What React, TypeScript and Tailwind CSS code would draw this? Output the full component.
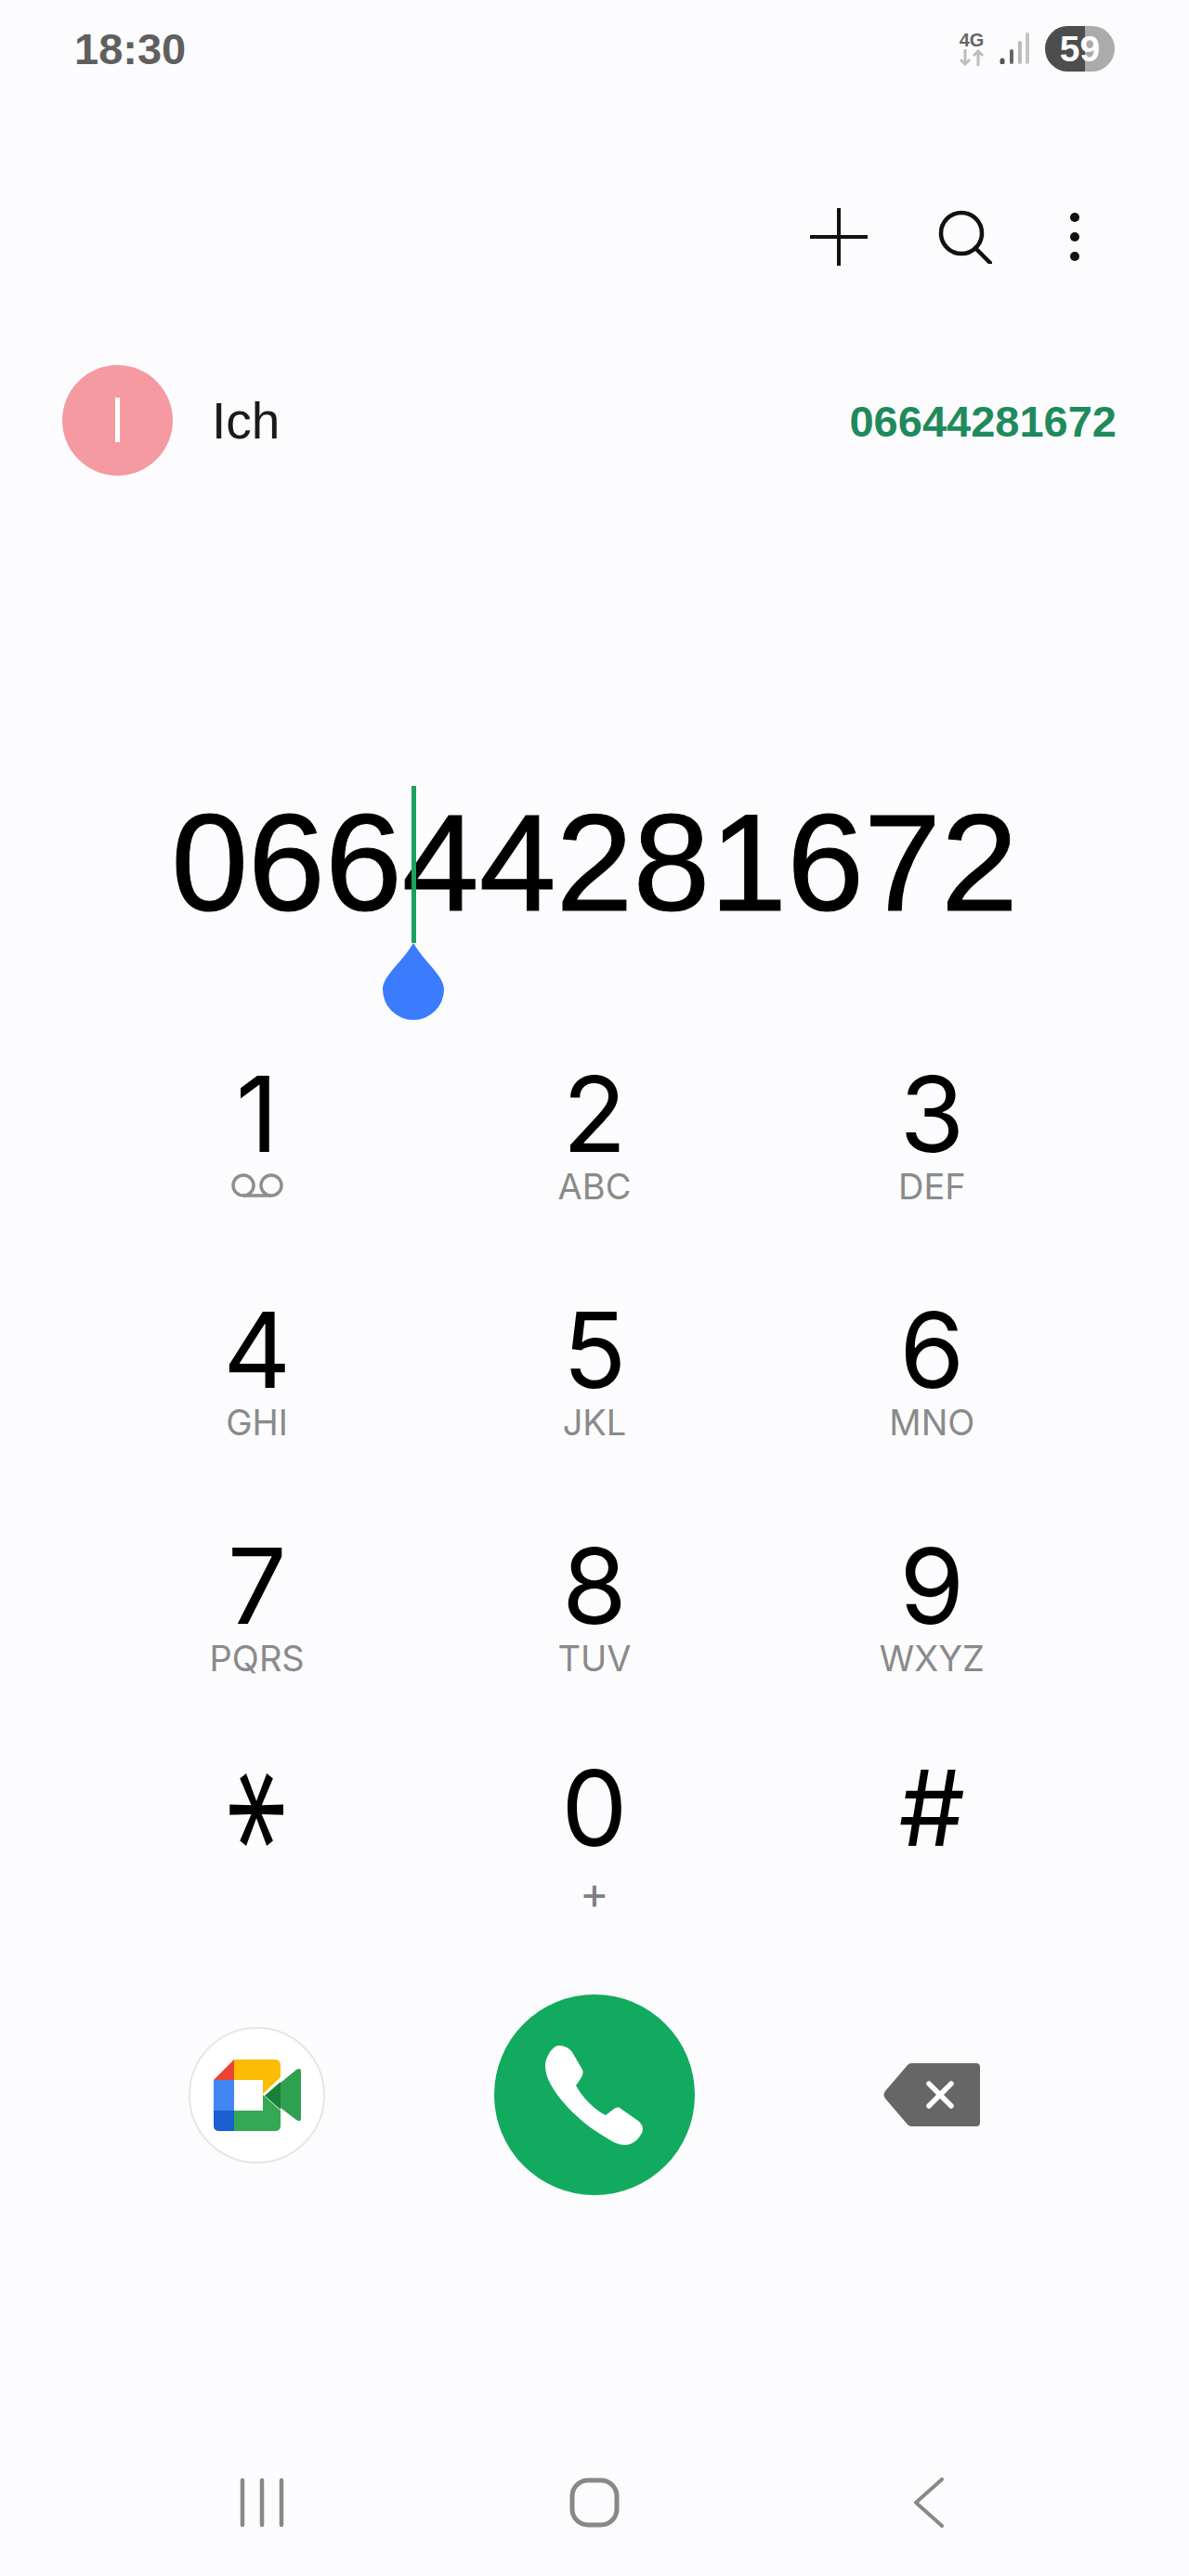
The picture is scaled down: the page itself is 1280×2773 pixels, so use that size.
const keys = [
  { digit: "1", sub: "" },
  { digit: "2", sub: "ABC" },
  { digit: "3", sub: "DEF" },
  { digit: "4", sub: "GHI" },
  { digit: "5", sub: "JKL" },
  { digit: "6", sub: "MNO" },
  { digit: "7", sub: "PQRS" },
  { digit: "8", sub: "TUV" },
  { digit: "9", sub: "WXYZ" },
  { digit: "*", sub: "" },
  { digit: "0", sub: "+" },
  { digit: "#", sub: "" },
];

function StatusIcons() {
  return (
    <div className="flex items-center">
      <div className="flex flex-col items-center w-[32px]">
        <span className="text-[20px] leading-[20px] font-bold text-[#666666] font-['Liberation_Sans',sans-serif]">4G</span>
        <svg width="30" height="18" viewBox="0 0 30 18" fill="none" stroke="#bdbdbd" strokeWidth="3">
          <path d="M8 0v16M3 11l5 5 5-5" />
          <path d="M22 18V2M17 7l5-5 5 5" />
        </svg>
      </div>
      <svg className="ml-[14px]" width="32" height="34" viewBox="0 0 32 34" fill="none" strokeLinecap="round" strokeWidth="4">
        <path d="M3 30v2" stroke="#555555" strokeWidth="5" />
        <path d="M13 20v12" stroke="#666666" />
        <path d="M22 11v21" stroke="#bbbbbb" />
        <path d="M30 2v30" stroke="#c4c4c4" />
      </svg>
      <div className="ml-[17px] w-[75px] h-[49px] rounded-full overflow-hidden flex items-center justify-center bg-[linear-gradient(90deg,#4d4d4d_0,#4d4d4d_58%,#ababab_58%,#ababab_100%)]">
        <span className="text-[39px] leading-none font-semibold text-white font-['Liberation_Sans',sans-serif]">59</span>
      </div>
    </div>
  );
}

function MeetLogo() {
  return (
    <svg width="94" height="77" viewBox="0 0 94 77">
      <path d="M22 0L0 22h22z" fill="#ea4335" />
      <path d="M22 0h44q6 0 6 6v13L53 37V22H22z" fill="#fbbc04" />
      <path d="M0 22h22v33H0z" fill="#4285f4" />
      <path d="M0 55h22v22H6q-6 0-6-6z" fill="#1a5fd0" />
      <path d="M22 55h31V38l19 17v16q0 6-6 6H22z" fill="#34a853" />
      <path d="M55 39L89 11q5-3 5 2v50q0 5-5 2z" fill="#2fa04f" />
      <path d="M55 39l17-15v30z" fill="#188038" />
    </svg>
  );
}

export default function App() {
  return (
    <div className="w-[1280px] h-[2773px] overflow-hidden bg-[#fcfcfe] font-['Inter','Liberation_Sans',sans-serif]">
      <div className="h-[104px] pl-[80px] pr-[80px] flex items-center justify-between">
        <span className="text-[47px] font-bold text-[#5f5f5f] leading-none font-['Liberation_Sans',sans-serif]">18:30</span>
        <StatusIcons />
      </div>

      {/* toolbar */}
      <div className="mt-[100px] h-[102px] flex items-center justify-end pr-[118px]">
        <svg width="62" height="62" viewBox="0 0 62 62" fill="none" stroke="#111111" strokeWidth="4">
          <path d="M0 31h62M31 0v62" />
        </svg>
        <svg className="ml-[76px]" width="58" height="58" viewBox="0 0 58 58" fill="none" stroke="#111111" strokeWidth="4.5" strokeLinecap="round">
          <circle cx="25" cy="25" r="22" />
          <path d="M40 41l16 16" />
        </svg>
        <div className="ml-[84px] w-[10px] h-[52px] flex flex-col justify-between">
          <span className="w-[10px] h-[10px] rounded-full bg-[#111111]" />
          <span className="w-[10px] h-[10px] rounded-full bg-[#111111]" />
          <span className="w-[10px] h-[10px] rounded-full bg-[#111111]" />
        </div>
      </div>

      {/* suggested contact */}
      <div className="mt-[86px] h-[120px] pl-[67px] pr-[78px] flex items-center justify-between">
        <div className="flex items-center">
          <div className="w-[119px] h-[119px] rounded-full bg-[#f59aa1] flex items-center justify-center">
            <span className="w-[5px] h-[48px] bg-white" />
          </div>
          <span className="ml-[42px] pt-[3px] text-[55px] leading-none text-[#1a1a1a] font-['Liberation_Sans',sans-serif]">Ich</span>
        </div>
        <span className="pt-[2px] text-[47px] leading-none font-bold text-[#1f8a5b] font-['Liberation_Sans',sans-serif]">06644281672</span>
      </div>

      {/* dialed number */}
      <div className="mt-[326px] h-[180px] flex items-center justify-center">
        <div className="relative">
          <span className="block text-[149px] leading-none text-black [-webkit-text-stroke:1px_black] font-['Liberation_Sans',sans-serif]">06644281672</span>
          <div className="absolute left-[228px] top-[-8px] flex flex-col items-center">
            <span className="w-[5px] h-[169px] bg-[#1aa35d]" />
            <svg width="66" height="83" viewBox="0 0 66 83">
              <path d="M33 0C44 20 66 35 66 50A33 33 0 0 1 0 50C0 35 22 20 33 0z" fill="#3b7cff" />
            </svg>
          </div>
        </div>
      </div>

      {/* keypad */}
      <div className="mt-[122px] px-[95px] grid grid-cols-3 grid-rows-[254px_254px_239px_259px]">
        {keys.map((k) => (
          <div key={k.digit} className="flex flex-col items-center">
            <span className="h-[118px] flex items-center text-[113px] leading-none text-black">
              {k.digit === "*" ? (
                <span className="inline-block rotate-90 scale-x-[1.2] scale-y-[0.83] text-[170px] font-light leading-none translate-x-[-23px] translate-y-[2px]">*</span>
              ) : (
                k.digit
              )}
            </span>
            {k.digit === "1" ? (
              <div className="h-[38px] flex items-center">
                <svg width="58" height="28" viewBox="0 0 58 28" fill="none" stroke="#8e8e8e" strokeWidth="3.5">
                  <circle cx="14" cy="13" r="11" />
                  <circle cx="44" cy="13" r="11" />
                  <path d="M14 24h30" />
                </svg>
              </div>
            ) : k.digit === "0" ? (
              <span className="mt-[14px] h-[38px] text-[48px] leading-[38px] text-[#808080]">+</span>
            ) : (
              <span className="h-[38px] text-[38px] leading-[38px] text-[#8a8a8a]">{k.sub}</span>
            )}
          </div>
        ))}
      </div>

      {/* actions */}
      <div className="px-[95px] h-[218px] grid grid-cols-3 items-center justify-items-center">
        <div className="w-[147px] h-[147px] rounded-full bg-white border-2 border-[#e6e6e6] flex items-center justify-center">
          <MeetLogo />
        </div>
        <div className="w-[216px] h-[216px] rounded-full bg-[#12aa5f] flex items-center justify-center">
          <svg width="105" height="107" viewBox="0 0 105 107">
            <path
              d="M15 0C21 0 26 3 29 7L40 26C42 31 38 36 33 43C40 56 52 68 65 75C71 71 76 65 80 67L100 81C105 85 106 90 104 94C100 102 93 107 86 107C79 107 73 104 67 100C53 92 42 84 33 75C22 65 12 53 6 42C2 35 0 28 0 22C0 14 7 0 15 0Z"
              fill="#ffffff"
            />
          </svg>
        </div>
        <svg width="104" height="68" viewBox="0 0 104 68">
          <path d="M30 0H100Q104 0 104 4V64Q104 68 100 68H30Q28 68 26 66L2 38Q-1 34 2 30L26 2Q28 0 30 0Z" fill="#666666" />
          <path d="M49 22l24 24M73 22L49 46" stroke="#ffffff" strokeWidth="5.5" strokeLinecap="round" />
        </svg>
      </div>

      {/* nav bar */}
      <div className="mt-[300px] h-[60px] px-[95px] grid grid-cols-3 items-center justify-items-center">
        <svg className="ml-[10px]" width="48" height="54" viewBox="0 0 48 54" fill="none" stroke="#888888" strokeWidth="4.5" strokeLinecap="round">
          <path d="M3 3v48M24 3v48M45 3v48" />
        </svg>
        <svg width="54" height="54" viewBox="0 0 54 54" fill="none" stroke="#888888" strokeWidth="5">
          <rect x="3" y="3" width="48" height="48" rx="17" />
        </svg>
        <svg className="ml-[-6px]" width="34" height="54" viewBox="0 0 34 54" fill="none" stroke="#888888" strokeWidth="4" strokeLinecap="round" strokeLinejoin="round">
          <path d="M31 2L3 27l28 25" />
        </svg>
      </div>
    </div>
  );
}
